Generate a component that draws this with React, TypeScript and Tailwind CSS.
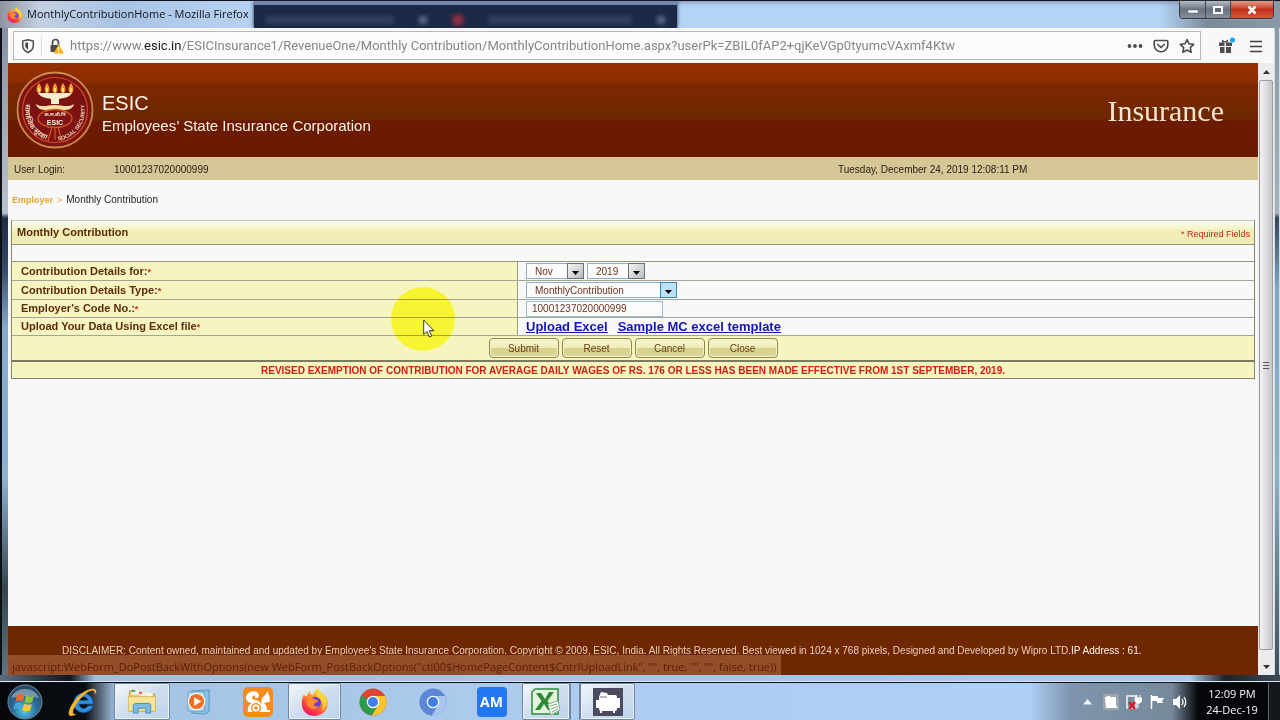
import React from "react";

const MONTHS = ["Nov", "Dec"];
const YEARS = ["2019", "2018"];
const TYPES = ["MonthlyContribution", "SupplementaryContribution"];
const ACTIONS = ["Submit", "Reset", "Cancel", "Close"];

function FirefoxIcon({ className }: { className: string }) {
  return (
    <svg viewBox="0 0 32 32" className={className} aria-hidden="true">
      <defs>
        <linearGradient id="fx" x1="0.8" y1="0" x2="0.25" y2="1">
          <stop offset="0" stopColor="#fff04a" />
          <stop offset="0.35" stopColor="#ffa62b" />
          <stop offset="0.7" stopColor="#ff4a3c" />
          <stop offset="1" stopColor="#e4136f" />
        </linearGradient>
      </defs>
      <path d="M3 8c1 0 2 1 3 2 1-3 3-5 4-7 0 3 2 5 4 5 1-4 3-6 6-8 0 4 6 6 9 11 4 8 0 20-13 21C6 32 0 25 1 16c0-3 1-6 2-8z" fill="url(#fx)" />
      <path d="M20 1c0 4 6 6 8 11 3 7-1 13-5 15 3-5 3-11-1-14-4-3-5-8-2-12z" fill="#ffd93b" opacity="0.85" />
      <circle cx="16" cy="17" r="7" fill="#6b3fd4" />
      <path d="M8 13c3-3 6-2 8 0 3 0 4 1 3 3-2 1-4 1-4 3 0 2 3 3 6 1-2 5-11 6-14-1-1-2-1-4 1-6z" fill="#ff8a2c" />
    </svg>
  );
}

function Seal() {
  return (
    <svg viewBox="0 0 78 78" className="size-[78px] shrink-0" role="img" aria-label="ESIC emblem">
      <defs>
        <path id="arcLeft" d="M10 33A30 30 0 0 0 36 69.500" />
        <path id="arcRight" d="M42 69.500A30 30 0 0 0 68 33" />
      </defs>
      <circle cx="39" cy="39" r="37.500" fill="#7c1512" stroke="#c98a4c" strokeWidth="1.800" />
      <circle cx="39" cy="39" r="32.500" fill="#7d1213" stroke="#cf4a20" strokeWidth="1.200" />
      <path d="M36 56 32 70M42 56l4 14M39 56v13" stroke="#d4531f" strokeWidth="1.200" fill="none" />
      {[23, 31, 39, 47, 55].map((x) => (
        <g key={x}>
          <path d={`M${x} 12c3 4 3.500 9 0 10.500c-3.500-1.500-3-6.500 0-10.500z`} fill="#f09a26" />
          <ellipse cx={x} cy="19" rx="1" ry="2.200" fill="#ffe88a" />
        </g>
      ))}
      <path d="M22 22h34c-2 4-8 5-13 6v5h-8v-5c-5-1-11-2-13-6z" fill="#f6ecd0" />
      <path d="M20 33c6 4 12 1 19 1s13 3 19-1c-1 5-6 6-10 6H30c-4 0-9-1-10-6z" fill="#f5dfa6" />
      <ellipse cx="39" cy="47.500" rx="17" ry="9" fill="#811413" stroke="#d4531f" strokeWidth="1.300" />
      <text x="39" y="45" textAnchor="middle" fontSize="5" fontWeight="700" fill="#f6e6cf" className="font-['Noto_Sans',sans-serif]">क.रा.बी.नि</text>
      <text x="39" y="53.500" textAnchor="middle" fontSize="7" fontWeight="700" fill="#fff2e0" className="font-['Liberation_Sans',sans-serif]">ESIC</text>
      <text fontSize="7" fontWeight="700" fill="#ecd3b8" className="font-['Noto_Sans',sans-serif]">
        <textPath href="#arcLeft">सामाजिक सुरक्षा</textPath>
      </text>
      <text fontSize="5.500" fontWeight="700" fill="#ecd3b8" className="font-['Liberation_Sans',sans-serif]">
        <textPath href="#arcRight">SOCIAL SECURITY</textPath>
      </text>
    </svg>
  );
}

function TitleBar() {
  return (
    <header className="flex h-7 shrink-0 border-t border-[#10101c] bg-[linear-gradient(180deg,#8ea3c4_0px,#b3d3f6_5px,#b5d5f7_100%)]">
      <div className="flex w-[254px] shrink-0 items-center gap-1 bg-[linear-gradient(90deg,#8d94a0_0px,#c3d0e2_40px,#aac4e6_120px,#b7d2f2_100%)] pl-[7px]">
        <FirefoxIcon className="size-4" />
        <h1 className="font-['Open_Sans','Noto_Sans',sans-serif] text-[11px] whitespace-nowrap text-[#10131a]">MonthlyContributionHome - Mozilla Firefox</h1>
      </div>
      <div className="flex w-[423px] shrink-0 items-end justify-between border-t-4 border-[#7387ac] bg-[#1b2946] px-3 shadow-[0_0_4px_#1b2946]">
        <span className="mb-1 h-2 w-32 bg-[#33415f] blur-[2px]" />
        <span className="mb-1 size-2 bg-[#5a6784] blur-[2px]" />
        <span className="mb-[2px] size-3 rounded-full bg-[#8d2d40] blur-[2px]" />
        <span className="mb-1 h-2 w-36 bg-[#33415f] blur-[2px]" />
        <span className="mb-1 size-2 bg-[#5a6784] blur-[2px]" />
      </div>
      <div className="flex flex-1 items-start justify-end bg-[linear-gradient(90deg,transparent_0%,transparent_80%,#7b8a9b_88%,#8b9aa6_100%)] pr-[6px]">
        <div className="flex h-[18px] overflow-hidden rounded-b border border-t-0 border-[#303844] shadow-[0_0_1px_#ffffff]">
          <button aria-label="Minimize" className="flex w-[26px] items-center justify-center border-r border-[#404854] bg-linear-to-b from-[#b6bec8] via-[#69727f] to-[#858e98]">
            <svg viewBox="0 0 12 12" className="size-3"><path d="M1 6h10v3H1z" fill="#fff" stroke="#59616c" strokeWidth=".5" /></svg>
          </button>
          <button aria-label="Maximize" className="flex w-[25px] items-center justify-center border-r border-[#404854] bg-linear-to-b from-[#b6bec8] via-[#69727f] to-[#858e98]">
            <svg viewBox="0 0 12 12" className="size-3"><path d="M2 3h8v6H2z" fill="#5f6874" stroke="#fff" strokeWidth="2" /></svg>
          </button>
          <button aria-label="Close window" className="flex w-[42px] items-center justify-center bg-linear-to-b from-[#e29b87] via-[#c23117] to-[#d4583a]">
            <svg viewBox="0 0 12 12" className="size-3"><path d="M2.500 2.500l7 7M9.500 2.500l-7 7" stroke="#fff" strokeWidth="2.600" /></svg>
          </button>
        </div>
      </div>
    </header>
  );
}

function AddressBar() {
  return (
    <nav className="flex h-[35px] shrink-0 items-center bg-[#f8f8f9] pr-[10px] pl-[5px]">
      <div className="flex h-[29px] min-w-0 flex-1 items-center border border-[#b6b7ba] bg-[#fbfbfb] pr-[5px]">
        <button aria-label="Tracking protection" className="flex w-[27px] justify-center">
          <svg viewBox="0 0 16 16" className="size-4"><path d="M8 1.700 13.300 3v4.500c0 3-2 5.500-5.300 7-3.300-1.500-5.300-4-5.300-7V3z" fill="none" stroke="#4b4b50" strokeWidth="1.500" /><path d="M8 4.200v7.600C6 10.500 5.200 9 5.200 7.300V4.900z" fill="#4b4b50" /></svg>
        </button>
        <span className="h-5 w-px bg-[#dcdcde]" />
        <button aria-label="Connection not secure" className="flex w-7 justify-center">
          <svg viewBox="0 0 16 16" className="size-4"><path d="M4.500 8V4.500a3 3 0 0 1 6 0V7" fill="none" stroke="#4b4b50" strokeWidth="1.700" /><rect x="2.500" y="7" width="9" height="7" rx="1" fill="#4b4b50" /><path d="M10.700 6 16 15.500H5.500z" fill="#f7b21c" /><path d="M10.700 9v3M10.700 13v1.200" stroke="#fff" strokeWidth="1.200" /></svg>
        </button>
        <div role="textbox" aria-label="Address" contentEditable suppressContentEditableWarning className="min-w-0 flex-1 overflow-hidden font-['Roboto','Noto_Sans',sans-serif] text-[13px] leading-5 whitespace-nowrap text-[#87878b] outline-none">
          https://www.<span className="text-[#17171a]">esic.in</span>/ESICInsurance1/RevenueOne/Monthly Contribution/MonthlyContributionHome.aspx?userPk=ZBIL0fAP2+qjKeVGp0tyumcVAxmf4Ktw
        </div>
        <div className="flex items-center gap-[10px]">
          <button aria-label="Page actions"><svg viewBox="0 0 16 16" className="size-4"><g fill="#4b4b50"><circle cx="2.500" cy="8" r="1.900" /><circle cx="8" cy="8" r="1.900" /><circle cx="13.500" cy="8" r="1.900" /></g></svg></button>
          <button aria-label="Save to Pocket"><svg viewBox="0 0 16 16" className="size-4"><path d="M2.200 2.500h11.600q1 0 1 1V7A6.800 6.800 0 0 1 1.200 7V3.500q0-1 1-1z" fill="none" stroke="#4b4b50" strokeWidth="1.600" /><path d="m4.800 6.500 3.200 3 3.200-3" fill="none" stroke="#4b4b50" strokeWidth="1.700" strokeLinecap="round" strokeLinejoin="round" /></svg></button>
          <button aria-label="Bookmark"><svg viewBox="0 0 16 16" className="size-4"><path d="m8 1.500 2 4.300 4.700.6-3.400 3.200.9 4.700L8 12l-4.200 2.300.9-4.700L1.300 6.400 6 5.800z" fill="none" stroke="#4b4b50" strokeWidth="1.600" strokeLinejoin="round" /></svg></button>
        </div>
      </div>
      <div className="flex items-center gap-[13px] pl-4">
        <button aria-label="What's new">
          <svg viewBox="0 0 18 18" className="size-[18px]"><g fill="#4b4b50"><path d="M2 5.500h5.500V9H2zM9 5.500h6V9H9zM3 10h4.500v6H3zM9 10h5v6H9z" /><path d="M5 2.500 8 4.500l3-2V5.500H5z" /></g><circle cx="15.500" cy="3" r="2.600" fill="#1ea7f0" /></svg>
        </button>
        <button aria-label="Open menu"><svg viewBox="0 0 16 16" className="size-4"><path d="M2 3.500h12M2 8.500h12M2 13.500h12" stroke="#3d3d42" strokeWidth="1.500" /></svg></button>
      </div>
    </nav>
  );
}

function SelectBox({ id, label, options, className, hot }: { id: string; label: string; options: string[]; className: string; hot?: boolean }) {
  return (
    <span className={`relative inline-flex h-4 ${className}`}>
      <select id={id} aria-label={label} className="h-4 w-full appearance-none border border-[#8fb0c9] bg-[#fbfbfb] pt-px pl-2 text-[10px] leading-3 text-[#6b3520] outline-none">
        {options.map((o) => <option key={o}>{o}</option>)}
      </select>
      <span className={`pointer-events-none absolute top-0 right-0 flex h-4 w-[17px] items-center justify-center border ${hot ? "border-[#3e86b5] bg-[#b9e2f7]" : "border-[#68727c] bg-linear-to-br from-[#f4f4f4] to-[#b9bcc1]"}`}>
        <svg viewBox="0 0 7 4" className="mt-1 h-1 w-[7px]"><path d="M0 0h7L3.500 4z" fill="#000" /></svg>
      </span>
    </span>
  );
}

function Row({ label, htmlFor, height, children }: { label: string; htmlFor: string; height: string; children: React.ReactNode }) {
  return (
    <div className={`flex border-b border-[#a5a595] ${height}`}>
      <label htmlFor={htmlFor} className="flex w-[506px] shrink-0 items-center border-r border-[#9a9a84] bg-[#f7f5bf] pl-[9px] text-[11px] leading-4 font-bold text-[#5d2a0c]">
        <span>{label}<span className="text-[9px] text-[#d62a1c]">*</span></span>
      </label>
      <div className="flex flex-1 items-center gap-[3px] pl-2">{children}</div>
    </div>
  );
}

function ContributionForm() {
  return (
    <form onSubmit={(e) => e.preventDefault()} className="mr-[3px] ml-[3px] border border-[#85856f] border-t-[#c4c4b4]">
      <div className="flex h-6 items-center justify-between border-b border-[#96967c] bg-[linear-gradient(180deg,#fafaf4_0%,#f6f4c6_35%,#f0eeb6_40%,#efedb4_100%)] pr-1 pl-[5px]">
        <h2 className="text-[11px] font-bold text-[#5d2a0c]">Monthly Contribution</h2>
        <span className="pt-1 text-[9px] text-[#c8251a]">* Required Fields</span>
      </div>
      <div className="h-[17px] border-b border-[#96967c]" />
      <Row label="Contribution Details for:" htmlFor="month" height="h-[19px]">
        <SelectBox id="month" label="Month" options={MONTHS} className="w-[58px]" />
        <SelectBox id="year" label="Year" options={YEARS} className="w-[58px]" />
      </Row>
      <Row label="Contribution Details Type:" htmlFor="ctype" height="h-[19px]">
        <SelectBox id="ctype" label="Contribution type" options={TYPES} className="w-[151px]" hot />
      </Row>
      <Row label="Employer's Code No.:" htmlFor="code" height="h-[18px]">
        <input id="code" defaultValue="10001237020000999" className="h-4 w-[137px] border border-[#9dbbd2] bg-[#fbfbfb] px-[5px] text-[10px] leading-3 text-[#6b3520] outline-none" />
      </Row>
      <Row label="Upload Your Data Using Excel file" htmlFor="upload" height="h-[18px]">
        <div className="flex gap-[10px] text-[13px] leading-4 font-bold text-[#1414b8] underline">
          <a id="upload" href="#upload">Upload Excel</a>
          <a href="#template">Sample MC excel template</a>
        </div>
      </Row>
      <div className="flex h-[26px] items-center justify-center gap-[3px] border-b-2 border-[#7b7b62] bg-[#f7f5bf]">
        {ACTIONS.map((a) => (
          <button key={a} type={a === "Submit" ? "submit" : "button"} className="h-5 w-[70px] rounded-sm border border-[#8f8a52] bg-[linear-gradient(180deg,#f8f6d2_0%,#efecba_50%,#d5d08a_52%,#ddd898_100%)] pt-px text-[10px] leading-4 text-[#66401c] shadow-[inset_0_0_0_1px_#f6f3c8]">
            {a}
          </button>
        ))}
      </div>
      <p className="flex h-4 items-center justify-center bg-[#f7f5bf] pt-px text-[10px] leading-4 font-bold whitespace-nowrap text-[#cf1f14]">
        REVISED EXEMPTION OF CONTRIBUTION FOR AVERAGE DAILY WAGES OF RS. 176 OR LESS HAS BEEN MADE EFFECTIVE FROM 1ST SEPTEMBER, 2019.
      </p>
    </form>
  );
}

function Scrollbar() {
  return (
    <div className="flex w-4 shrink-0 flex-col items-center bg-[#ececee]" aria-hidden="true">
      <div className="flex h-[17px] items-center"><svg viewBox="0 0 7 4" className="h-1 w-[7px]"><path d="M0 4h7L3.500 0z" fill="#333" /></svg></div>
      <div className="flex w-[14px] flex-1 items-center justify-center rounded-xs border border-[#9d9da2] bg-linear-to-r from-[#f3f3f4] via-[#dedee1] to-[#c3c3c9]">
        <svg viewBox="0 0 8 9" className="h-[9px] w-2"><path d="M1 1.500h6M1 4.500h6M1 7.500h6" stroke="#55555a" /></svg>
      </div>
      <div className="flex h-[25px] items-center pt-2"><svg viewBox="0 0 7 4" className="h-1 w-[7px]"><path d="M0 0h7L3.500 4z" fill="#333" /></svg></div>
    </div>
  );
}

function WebPage() {
  return (
    <main className="flex min-w-0 flex-1 flex-col bg-[#f8f8f8] font-['Liberation_Sans',sans-serif]">
      <div className="flex h-[94px] shrink-0 items-center justify-between bg-[linear-gradient(180deg,#963100_0px,#8b2c00_19px,#7f2700_21px,#6d2800_56px,#6b1c00_58px,#6b1c00_100%)] pr-[34px] pl-2">
        <div className="flex items-center gap-2">
          <Seal />
          <div className="pt-1 text-[#fbf1e8]">
            <div className="text-xl leading-6">ESIC</div>
            <div className="pt-[3px] text-[15px] leading-4">Employees’ State Insurance Corporation</div>
          </div>
        </div>
        <div className="pt-[2px] font-['Liberation_Serif',serif] text-[30px] leading-8 text-[#f6e3d2]">Insurance</div>
      </div>
      <div className="flex h-[23px] shrink-0 items-center bg-[#d6c896] pt-px pl-[6px] text-[10px] text-[#2a2118]">
        <span className="w-[100px]">User Login:</span>
        <span className="flex-1">10001237020000999</span>
        <time className="w-[420px]">Tuesday, December 24, 2019 12:08:11 PM</time>
      </div>
      <div className="flex h-10 shrink-0 items-center pl-1 text-[10px] text-[#1d1d1d]">
        <div className="flex items-baseline gap-1">
          <a href="#employer" className="text-[9px] font-bold text-[#e5a52f]">Employer</a>
          <span className="text-[9px] text-[#e5a52f]">&gt;</span>
          <span>Monthly Contribution</span>
        </div>
      </div>
      <ContributionForm />
      <div className="flex-1" />
      <footer className="flex h-[49px] shrink-0 items-center bg-[#6e2700] pl-[54px] text-[10px] whitespace-nowrap text-[#ecd0bb]">
        <p>
          DISCLAIMER: Content owned, maintained and updated by Employee's State Insurance Corporation. Copyright © 2009, ESIC, India. All Rights Reserved. Best viewed in 1024 x 768 pixels, Designed and Developed by Wipro LTD.<span className="text-[#fff4ea]">IP Address : 61.</span>
        </p>
      </footer>
    </main>
  );
}

function ChromeIcon({ mono }: { mono?: boolean }) {
  const c = mono ? ["#5b87d6", "#7fa6e4", "#a9c4ef"] : ["#dc4535", "#fbc52f", "#2c9a4b"];
  return (
    <svg viewBox="0 0 28 28" className="size-7">
      <circle cx="14" cy="14" r="13.500" fill={c[0]} />
      <path d="M14 14 2.300 7.300A13.500 13.500 0 0 0 12.800 27.400L19.600 17z" fill={mono ? c[0] : c[2]} />
      <path d="M14 8h12A13.500 13.500 0 0 1 12.800 27.500L19.300 17z" fill={mono ? c[2] : c[1]} />
      <circle cx="14" cy="14" r="6.300" fill="#f4f8ff" />
      <circle cx="14" cy="14" r="5" fill="#3f7fe6" />
    </svg>
  );
}

const PLAIN = "flex h-full items-center justify-center";
const OPEN = "flex h-full items-center justify-center rounded-xs border border-[#6f87a3] bg-linear-to-br from-[#f3f7fb] via-[#cfdeee] to-[#bcd3ec] shadow-[inset_0_0_0_1px_#e9f1fa]";

function Taskbar() {
  return (
    <div className="flex h-[38px] shrink-0 items-stretch border-t border-[#0d1218] bg-[linear-gradient(90deg,#05070b_0px,#0a0e14_85px,#93adc9_112px,#a6c4e4_160px,#aecdf0_640px,#aed0f5_1030px,#7f95ad_1070px,#76899c_1172px,#05070a_1198px,#05070a_100%)]">
      <button aria-label="Start" className={`${PLAIN} w-[50px]`}>
        <svg viewBox="0 0 36 36" className="size-9">
          <defs><radialGradient id="orb" cx=".5" cy=".75" r=".75"><stop offset="0" stopColor="#5cd0ee" /><stop offset=".45" stopColor="#2b6f9f" /><stop offset="1" stopColor="#26435c" /></radialGradient></defs>
          <circle cx="18" cy="18" r="17" fill="url(#orb)" stroke="#71899a" />
          <path d="M4 14a14.500 12 0 0 1 28 0q-14-4-28 0z" fill="#b7cad6" opacity=".55" />
          <path d="M10 11q4-3 7.500 0l-1.500 6.500q-4-2-7.500 0z" fill="#ee6a2c" />
          <path d="M19 11q4 2.500 8 .5l-1.800 6.500q-4 2-7.700-.3z" fill="#8cc63f" />
          <path d="M8 19.200q4-2 7.500.2l-1.700 6.400q-4-2.300-7.300-.4z" fill="#4aa3e0" />
          <path d="M17 19.700q4 2 7.800.2l-1.700 6.300q-4 2-7.700-.3z" fill="#fdc92e" />
        </svg>
      </button>
      <button aria-label="Internet Explorer" className={`${PLAIN} w-16`}>
        <svg viewBox="0 0 32 32" className="size-8">
          <path d="M27 18H13c0 5 7 6 9 2h5c-4 10-19 8-19-3C8 4 27 4 27 18zM13 14.500h9c0-5-8.500-5-9 0z" fill="#2e8fe0" stroke="#1c62b0" strokeWidth=".7" />
          <path d="M30 4c-4-4-15 2-21 10C2 23 1 30 5 30c2 0 4-1 6-2-4 1-6-1-1-9C16 9 25 3 28 5c1 1 1 2 0 4 2-2 3-4 2-5z" fill="#f3b52d" />
        </svg>
      </button>
      <button aria-label="Windows Explorer" className={`${OPEN} w-14`}>
        <svg viewBox="0 0 32 30" className="h-[29px] w-8">
          <path d="M3 4h9l2 3h15v18H3z" fill="#e9c75a" stroke="#b4913a" strokeWidth=".7" />
          <path d="M5 3h8v5H5z" fill="#f2f2ea" /><path d="M5 3h4v2H5z" fill="#4c9a57" /><path d="M13 5h7v5h-7z" fill="#f4e9dd" /><path d="M13 5h3v2h-3z" fill="#d55442" /><path d="M20 6h7v4h-7z" fill="#f4f4f0" />
          <path d="M2 10h28v15H2z" fill="#f7e495" stroke="#cda948" strokeWidth=".7" />
          <path d="M7 27v-8q0-2 2-2h14q2 0 2 2v8h-5v-5h-8v5z" fill="#7dbbe2" stroke="#488ebd" />
        </svg>
      </button>
      <button aria-label="Media Player" className={`${PLAIN} w-14`}>
        <svg viewBox="0 0 28 28" className="size-[27px]">
          <path d="M7 3 25 2v22l-4 3L7 26z" fill="#8ac0e0" stroke="#5597c2" /><path d="M3 4h17v20H3z" fill="#b5d7ec" stroke="#68a3ca" />
          <circle cx="12" cy="14" r="8.500" fill="#ed7026" stroke="#fff" strokeWidth="1.200" /><path d="M9.500 9.500 17 14l-7.500 4.500z" fill="#fff" />
        </svg>
      </button>
      <button aria-label="UC Browser" className={`${PLAIN} w-16`}>
        <svg viewBox="0 0 30 30" className="size-[30px]">
          <rect width="30" height="30" rx="5" fill="#f58b1f" />
          <path d="M5 25c-1-4 1-8 4-9-4 0-6-3-6-6 1-5 8-8 12-4 2 3 0 6-3 5 1-2-1-3-2-2-2 2 0 4 3 4 3 1 4 2 5 4l1-6 4-4 1-3 2 4c1 2 0 4 1 5 0 2-1 2-2 2l-4 1c2 2 3 4 3 7h3v2z" fill="#fff" />
          <circle cx="13" cy="21" r="5" fill="#f58b1f" /><circle cx="13" cy="21" r="3.600" fill="#fff" /><circle cx="13" cy="21" r="1.700" fill="#f58b1f" />
        </svg>
      </button>
      <button aria-label="Firefox" className={`${OPEN} ml-[-2px] w-[53px]`}><FirefoxIcon className="size-7" /></button>
      <button aria-label="Chrome" className={`${PLAIN} w-16`}><ChromeIcon /></button>
      <button aria-label="Chromium" className={`${PLAIN} w-14`}><ChromeIcon mono /></button>
      <button aria-label="AM" className={`${PLAIN} w-[61px]`}>
        <span className="flex size-[30px] items-center justify-center rounded-sm bg-[#2277f3] font-['Open_Sans',sans-serif] text-sm font-bold text-white">AM</span>
      </button>
      <button aria-label="Excel" className={`${OPEN} w-12`}>
        <svg viewBox="0 0 30 28" className="h-7 w-[30px]">
          <path d="M4 1h23v25H1V4z" fill="#e6f3de" stroke="#2f8d3c" strokeWidth="1.500" />
          <path d="M5 5h5l4 6 4-7h5l-6.500 9L23 22h-6l-4-6-4 6H4l6.500-9z" fill="#2d8b35" />
          <path d="m17 16 10-3 2 9-9 5z" fill="#fff" stroke="#7fb087" /><path d="m19 18 7-2M20 21l7-2.500M21 24l6-3" stroke="#69a572" />
        </svg>
      </button>
      <div className="w-[10px] border-x border-[#6f87a3]" />
      <button aria-label="Recorder" className={`${OPEN} w-[55px]`}>
        <svg viewBox="0 0 30 28" className="h-7 w-[30px]">
          <rect width="30" height="28" fill="#4b4a5e" />
          <path d="m6 9 2-5 6 1 1 2h7q2 0 2 2v12q0 2-2 2H8q-2 0-2-2z" fill="#fff" />
          <path d="M3 12h3v8H3zM24 10h3v10h-3zM7 23h2v2H7zM20 23h2v2h-2z" fill="#fff" />
          <path d="M7 9h7" stroke="#4b4a5e" strokeWidth=".8" />
        </svg>
      </button>
      <div className="flex flex-1 items-center justify-end gap-[7px] pr-3">
        <button aria-label="Show hidden icons" className="mr-1"><svg viewBox="0 0 9 6" className="h-[6px] w-[9px]"><path d="M0 5.500h9L4.500 0z" fill="#eef4fa" /></svg></button>
        <svg viewBox="0 0 16 16" className="size-4"><rect width="16" height="16" rx="1" fill="#9da5ad" /><path d="M2 3h2V2h3v1h6v9h1v2H3z" fill="#fff" /></svg>
        <svg viewBox="0 0 16 16" className="size-4"><path d="M1 2h9v12H1z" fill="none" stroke="#f3f5f7" strokeWidth="1.500" /><path d="M11 1v3M14 1v3M9 4h7v3l-2 2h-3L9 7zM12 9v5" stroke="#fff" fill="#fff" /><path d="m3 8 6 7M9 8l-6 7" stroke="#df1b22" strokeWidth="2.600" /></svg>
        <svg viewBox="0 0 16 16" className="size-4"><path d="M2.500 1v14" stroke="#fff" strokeWidth="1.500" /><path d="M3 2h6v2h6l-2 3 1 2H8V7H3z" fill="#fff" /></svg>
        <svg viewBox="0 0 16 16" className="size-4"><path d="M1 5h3l4-4v14l-4-4H1z" fill="#fff" /><path d="M10 5q2 3 0 6M12 3q3.500 5 0 10" fill="none" stroke="#fff" strokeWidth="1.300" /></svg>
      </div>
      <time className="flex w-[64px] flex-col justify-center pt-px text-center font-['Open_Sans','Noto_Sans',sans-serif] text-[11px] leading-4 whitespace-nowrap text-[#f4f6f8]">
        <span>12:09 PM</span><span>24-Dec-19</span>
      </time>
      <button aria-label="Show desktop" className="ml-1 w-3 border-l border-[#5b6168] bg-[#14181c]" />
    </div>
  );
}

export default function App() {
  return (
    <div className="relative flex h-screen min-h-[480px] flex-col overflow-hidden bg-[#0a0d14]">
      <TitleBar />
      <div className="flex min-h-0 flex-1">
        <div className="w-2 shrink-0 border-l-2 border-[#0d1016] bg-[linear-gradient(180deg,#8591a3_0px,#b9c2ce_185px,#1f2c44_190px,#35496a_240px,#85a9cf_300px,#8fb1d2_450px,#33464f_560px,#5f7480_100%)]" />
        <div className="flex min-w-0 flex-1 flex-col">
          <AddressBar />
          <div className="relative flex min-h-0 flex-1">
            <WebPage />
            <Scrollbar />
            <div className="absolute bottom-0 left-0 h-5 bg-[#a35a36]/75 pr-1 pl-1 font-['Open_Sans','Noto_Sans',sans-serif] text-[11px] leading-6 whitespace-nowrap text-[#571f08]">
              {'javascript:WebForm_DoPostBackWithOptions(new WebForm_PostBackOptions("ctl00$HomePageContent$CntrlUploadLink", "", true, "", "", false, true))'}
            </div>
          </div>
        </div>
        <div className="w-[6px] shrink-0 border-x border-[#d4dde4] bg-[linear-gradient(180deg,#8a9aa6_0px,#a3b2bc_185px,#33465a_190px,#7fa8c4_260px,#8db0c4_450px,#3b4e58_100%)]" />
      </div>
      <div className="h-[7px] shrink-0 border-b border-[#dbe6f0] bg-[linear-gradient(90deg,#5e7080_0px,#10151c_70px,#a3bfdc_95px,#abcbed_1190px,#1b2228_1225px,#3c4b55_100%)]" />
      <Taskbar />
      <div className="pointer-events-none absolute top-[287px] left-[391px] size-16 rounded-full bg-[#ffff42] mix-blend-multiply" />
      <svg viewBox="0 0 12 19" className="pointer-events-none absolute top-[319px] left-[423px] h-[19px] w-3" aria-hidden="true">
        <path d="M.7 1v14.500l3.300-3 2.300 5.500 2.400-1-2.300-5.300h4.500z" fill="#fff" stroke="#222" strokeWidth=".9" />
      </svg>
    </div>
  );
}
